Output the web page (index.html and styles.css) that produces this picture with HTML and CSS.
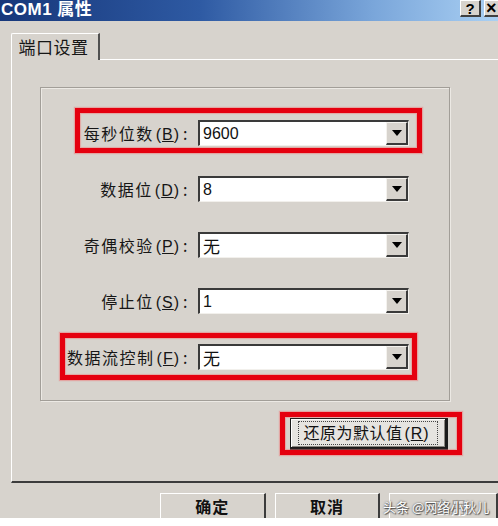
FILE: index.html
```html
<!DOCTYPE html>
<html lang="zh">
<head>
<meta charset="utf-8">
<title>COM1 属性</title>
<link rel="stylesheet" href="styles.css">
</head>
<body>
<div class="window">
  <div class="titlebar">
    <span class="title">COM1 属性</span>
    <div class="tb-btns">
      <span class="tb-btn help">?</span>
      <span class="tb-btn close">×</span>
    </div>
  </div>
  <div class="tabs">
    <div class="tab">端口设置</div>
    <div class="tab-line"></div>
  </div>
  <div class="panel">
    <div class="group">
      <div class="row">
        <label class="lbl">每秒位数<span class="key">(<u>B</u>)</span>:</label>
        <div class="combo"><span class="val">9600</span><span class="arrow"><i></i></span></div>
      </div>
      <div class="row">
        <label class="lbl">数据位<span class="key">(<u>D</u>)</span>:</label>
        <div class="combo"><span class="val">8</span><span class="arrow"><i></i></span></div>
      </div>
      <div class="row">
        <label class="lbl">奇偶校验<span class="key">(<u>P</u>)</span>:</label>
        <div class="combo"><span class="val cjk">无</span><span class="arrow"><i></i></span></div>
      </div>
      <div class="row">
        <label class="lbl">停止位<span class="key">(<u>S</u>)</span>:</label>
        <div class="combo"><span class="val">1</span><span class="arrow"><i></i></span></div>
      </div>
      <div class="row">
        <label class="lbl">数据流控制<span class="key">(<u>F</u>)</span>:</label>
        <div class="combo"><span class="val cjk">无</span><span class="arrow"><i></i></span></div>
      </div>
    </div>
    <div class="restore-wrap">
      <button class="btn restore"><span class="focus">还原为默认值<span class="key">(<u>R</u>)</span></span></button>
    </div>
  </div>
  <div class="footer">
    <button class="btn fbtn">确定</button>
    <button class="btn fbtn">取消</button>
    <button class="btn fbtn disabled">应用</button>
  </div>

  <div class="hl hl-baud"></div>
  <div class="hl hl-flow"></div>
  <div class="hl hl-restore"></div>
  <div class="watermark">头条 @网络小秋儿</div>
</div>
</body>
</html>
```

FILE: styles.css
```css
html, body {
  margin: 0;
  padding: 0;
}
body {
  background: #ffffff;
  width: 498px;
  height: 526px;
  overflow: hidden;
  font-family: "Noto Sans CJK SC", "Liberation Sans", sans-serif;
  color: #161616;
}
.window {
  position: relative;
  width: 498px;
  height: 518px;
  overflow: hidden;
  background: #d7d3cd;
}

/* title bar */
.titlebar {
  height: 21px;
  display: flex;
  align-items: flex-start;
  justify-content: space-between;
  background: linear-gradient(90deg, #17377a 0%, #2e5aa3 40%, #7aa6da 75%, #aad0f3 100%);
}
.title {
  font-family: "Liberation Sans", "Noto Sans CJK SC", sans-serif;
  font-weight: bold;
  font-size: 17px;
  line-height: 19px;
  color: #ffffff;
  padding-left: 1px;
  letter-spacing: 0.5px;
}
.tb-btns {
  display: flex;
  gap: 3px;
  margin-right: -7px;
}
.tb-btn {
  width: 21px;
  height: 17px;
  box-sizing: border-box;
  background: #d7d3cd;
  border-top: 1px solid #ffffff;
  border-left: 1px solid #ffffff;
  border-right: 2px solid #404040;
  border-bottom: 2px solid #404040;
  display: flex;
  align-items: center;
  justify-content: center;
  font-family: "Liberation Sans", sans-serif;
  font-weight: bold;
  font-size: 15px;
  color: #000;
}
.tb-btn.close {
  font-size: 18px;
  justify-content: flex-start;
  padding-left: 1px;
}

/* tabs */
.tabs {
  height: 39px;
  display: flex;
  align-items: flex-end;
}
.tab {
  margin-left: 11px;
  width: 89px;
  height: 27px;
  box-sizing: border-box;
  border-top: 1px solid #ffffff;
  border-left: 1px solid #ffffff;
  border-right: 2px solid #505050;
  border-top-left-radius: 2px;
  font-size: 17px;
  line-height: 25px;
  text-align: center;
  letter-spacing: 0.5px;
  padding-right: 3px;
}
.tab-line {
  flex: 1;
  height: 1px;
  background: #ffffff;
}

/* panel */
.panel {
  margin-left: 11px;
  height: 423px;
  box-sizing: border-box;
  border-left: 1px solid #ffffff;
  border-bottom: 2px solid #3c3c3c;
  padding-top: 27px;
  padding-left: 28px;
}
.group {
  width: 410px;
  height: 314px;
  box-sizing: border-box;
  border: 1px solid #a29e98;
  box-shadow: inset 1px 1px 0 #ece9e4, 1px 1px 0 #ece9e4;
  padding-top: 32px;
  display: flex;
  flex-direction: column;
  gap: 30px;
}
.row {
  display: grid;
  grid-template-columns: 150px 211px;
  column-gap: 7px;
  align-items: center;
  height: 26px;
}
.lbl {
  text-align: right;
  font-size: 16px;
  letter-spacing: 1.5px;
  padding-right: 2px;
  white-space: nowrap;
}
.key {
  margin: 0 3px 0 2px;
  letter-spacing: 1px;
  font-family: "Liberation Sans", sans-serif;
}
.combo {
  height: 26px;
  box-sizing: border-box;
  background: #ffffff;
  border-top: 2px solid #3a3a3a;
  border-left: 2px solid #3a3a3a;
  border-right: 1px solid #f2f0ec;
  border-bottom: 1px solid #f2f0ec;
  display: flex;
  align-items: center;
}
.val {
  flex: 1;
  padding-left: 3px;
  font-family: "Liberation Sans", sans-serif;
  font-size: 16px;
  color: #111;
}
.val.cjk {
  font-family: "Noto Sans CJK SC", sans-serif;
  font-size: 17px;
}
.arrow {
  width: 22px;
  height: 23px;
  box-sizing: border-box;
  background: #d7d3cd;
  border-top: 1px solid #f4f2ee;
  border-left: 1px solid #f4f2ee;
  border-right: 2px solid #3a3a3a;
  border-bottom: 2px solid #3a3a3a;
  display: flex;
  align-items: center;
  justify-content: center;
}
.arrow i {
  width: 0;
  height: 0;
  border-left: 5px solid transparent;
  border-right: 5px solid transparent;
  border-top: 6px solid #000;
}

/* restore button */
.restore-wrap {
  margin-top: 17px;
  padding-left: 250px;
}
.btn {
  font-family: "Noto Sans CJK SC", sans-serif;
  color: #111;
  background: #d7d3cd;
  padding: 0;
  margin: 0;
  cursor: default;
}
.restore {
  width: 158px;
  height: 32px;
  box-sizing: border-box;
  border: 1px solid #1a1a1a;
  border-right-width: 3px;
  border-bottom-width: 3px;
  background: #e6e4e0;
  box-shadow: inset 1px 1px 0 #ffffff, inset -1px -1px 0 #8a8680;
  display: flex;
  align-items: center;
  justify-content: center;
  font-size: 16px;
  letter-spacing: 0.5px;
}
.restore .focus {
  border: 1px dotted #444;
  padding: 0 4px;
  line-height: 20px;
}

/* footer */
.footer {
  margin-top: 10px;
  padding-left: 160px;
  display: flex;
  gap: 9px;
}
.fbtn {
  width: 107px;
  height: 30px;
  box-sizing: border-box;
  border-top: 1px solid #ffffff;
  border-left: 1px solid #ffffff;
  border-right: 2px solid #3c3c3c;
  border-bottom: 2px solid #3c3c3c;
  font-size: 16px;
  font-weight: bold;
  line-height: 22px;
  padding-bottom: 4px;
  letter-spacing: 1px;
}
.fbtn.disabled {
  width: 110px;
  color: #a29e99;
  text-shadow: 1px 1px 0 #ffffff;
  font-weight: normal;
  padding-left: 14px;
}

/* annotation highlights */
.hl {
  position: absolute;
  box-sizing: border-box;
  border: 5px solid #e5000f;
  box-shadow: 0 0 1px 1px rgba(240, 120, 120, 0.5), inset 0 0 1px 1px rgba(240, 120, 120, 0.5);
}
.hl-baud {
  left: 75px;
  top: 108px;
  width: 347px;
  height: 45px;
}
.hl-flow {
  left: 60px;
  top: 333px;
  width: 357px;
  height: 47px;
}
.hl-restore {
  left: 280px;
  top: 412px;
  width: 182px;
  height: 43px;
}

.watermark {
  position: absolute;
  left: 383px;
  top: 499px;
  font-size: 13px;
  line-height: 16px;
  color: #ffffff;
  white-space: nowrap;
  text-shadow: 0 0 2px #3a3a3a, 1px 1px 1px #555555;
}
```
